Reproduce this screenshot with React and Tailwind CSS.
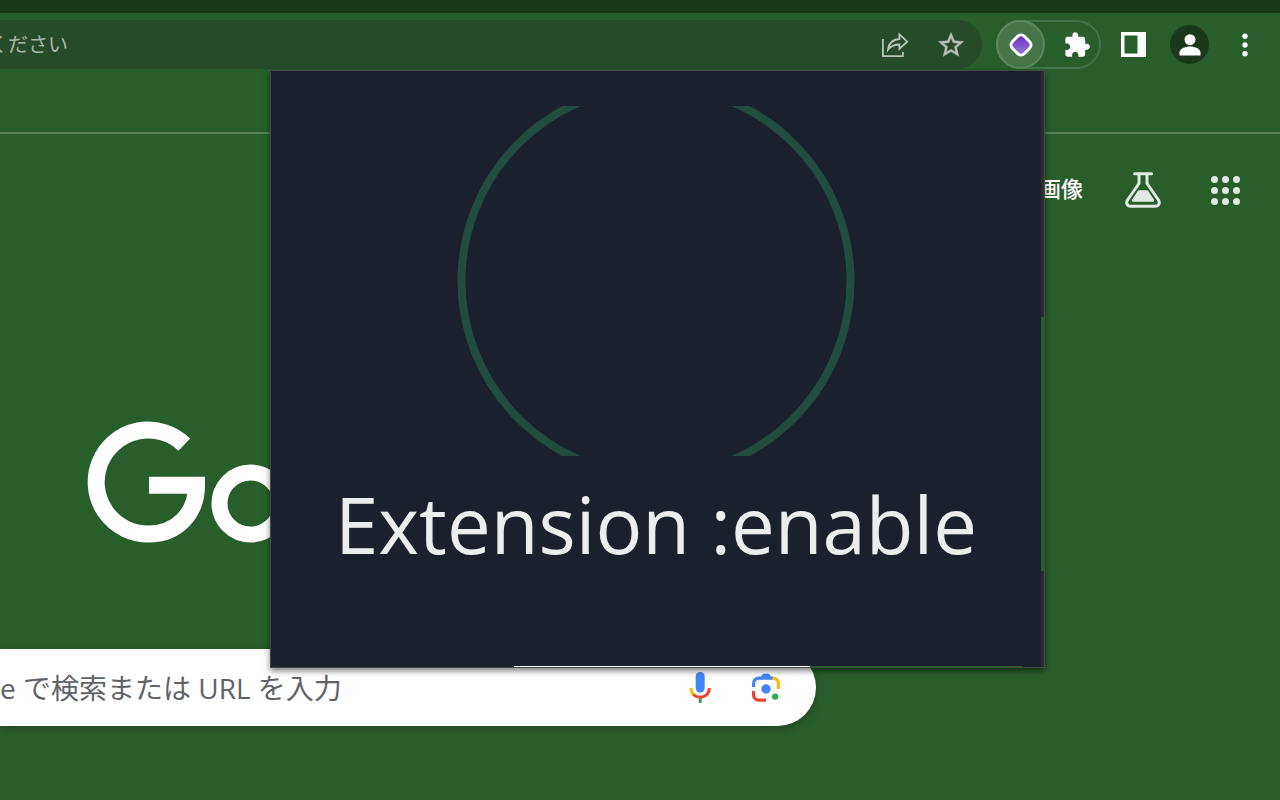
import React from "react";

const DOTS = [0, 1, 2, 3, 4, 5, 6, 7, 8];

function ShareIcon() {
  return (
    <svg width="28" height="28" viewBox="0 0 28 28" fill="none" stroke="#b9c4b9" strokeWidth="1.8">
      <path d="M1.9 8V25.2H21.9V21" />
      <path d="M7 18.7C7.5 12.5 11.5 8.6 18.4 8V3.4L26.2 10.7L18.4 18V13.5C13.5 13.5 10 14.8 7 18.7Z" />
    </svg>
  );
}

function StarIcon() {
  return (
    <svg width="30" height="30" viewBox="0 0 24 24" fill="#b9bfba" stroke="#b9bfba" strokeWidth="0.4">
      <path d="M22 9.24l-7.19-.62L12 2 9.19 8.63 2 9.24l5.46 4.73L5.82 21 12 17.27 18.18 21l-1.63-7.03L22 9.24zM12 15.4l-3.76 2.27 1-4.28-3.32-2.88 4.38-.38L12 6.1l1.71 4.04 4.38.38-3.32 2.88 1 4.28L12 15.4z" />
    </svg>
  );
}

function DiamondIcon() {
  return (
    <svg width="26" height="26" viewBox="0 0 26 26">
      <defs>
        <linearGradient id="purple" x1="0" y1="0" x2="1" y2="1">
          <stop offset="0" stopColor="#5b23c0" />
          <stop offset="1" stopColor="#a184dc" />
        </linearGradient>
      </defs>
      <rect x="4.5" y="4.5" width="17" height="17" rx="5" transform="rotate(45 13 13)" fill="url(#purple)" stroke="#fff" strokeWidth="3" />
    </svg>
  );
}

function PuzzleIcon() {
  return (
    <svg width="28" height="28" viewBox="0 0 24 24" fill="#fff">
      <path d="M20.5 11H19V7c0-1.1-.9-2-2-2h-4V3.5C13 2.12 11.88 1 10.5 1S8 2.12 8 3.5V5H4c-1.1 0-1.99.9-1.99 2v3.8H3.5c1.49 0 2.7 1.21 2.7 2.7s-1.21 2.7-2.7 2.7H2V20c0 1.1.9 2 2 2h3.8v-1.5c0-1.49 1.21-2.7 2.7-2.7 1.49 0 2.7 1.21 2.7 2.7V22H17c1.1 0 2-.9 2-2v-4h1.5c1.38 0 2.5-1.12 2.5-2.5S21.88 11 20.5 11z" />
    </svg>
  );
}

function FlaskIcon() {
  return (
    <svg width="36" height="36" viewBox="0 0 36 36" fill="none" stroke="#e2e9e2" strokeWidth="3" strokeLinecap="round" strokeLinejoin="round">
      <path d="M9.5 1.7H26.5" />
      <path d="M14 2V11.5L2.8 27.5C0.5 31 2 34.3 6 34.3H30C34 34.3 35.5 31 33.2 27.5L22 11.5V2" />
      <path d="M14 19.5H22L28 28.5H8Z" fill="#e2e9e2" strokeWidth="2.5" />
    </svg>
  );
}

function MicIcon() {
  return (
    <svg width="24" height="32" viewBox="0 0 24 32" fill="none">
      <rect x="7.7" y="0" width="9" height="20.5" rx="4.5" fill="#4285f4" />
      <path d="M12.2 26V31" stroke="#34a853" strokeWidth="3" />
      <path d="M3 16C3 19 4 21.2 5.6 22.8" stroke="#fbbc04" strokeWidth="3" />
      <path d="M5.3 22.5C9 26 15.4 26 18.8 22.5C20.5 20.8 21.3 18.7 21.3 16" stroke="#ea4335" strokeWidth="3" />
    </svg>
  );
}

function LensIcon() {
  return (
    <svg width="28" height="30" viewBox="0 0 28 30" fill="none" strokeWidth="3.2">
      <path d="M1.6 14V10.5C1.6 7 4 5.2 7 5.2H21" stroke="#4285f4" />
      <path d="M7.5 6L11 0.8H17L20.5 6Z" fill="#4285f4" />
      <path d="M20.5 5.2H21C24 5.2 26.4 7.3 26.4 10.5V16" stroke="#fbbc04" />
      <path d="M1.6 18V22C1.6 25.3 4 27.2 7 27.2H14" stroke="#ea4335" />
      <circle cx="14" cy="16" r="4.7" fill="#4285f4" />
      <circle cx="23.2" cy="23.6" r="3.2" fill="#34a853" />
    </svg>
  );
}

function Logo() {
  return (
    <svg width="190" height="124" viewBox="0 0 190 124" fill="none" stroke="#fff" role="img" aria-label="Google">
      <path d="M97.3 24.6A52 52 0 1 0 61.5 114C90 114 109.5 93.5 109.5 65.2H62" strokeWidth="17" />
      <circle cx="163.5" cy="83.5" r="31" strokeWidth="16" />
    </svg>
  );
}

function Toolbar() {
  return (
    <header className="flex h-[63px] items-center gap-3 bg-[#285e2b] pr-5">
      <div className="flex h-[49px] flex-1 items-center justify-between rounded-r-full bg-[#274a2a] pr-4">
        <input
          aria-label="Address"
          defaultValue="ください"
          className="w-40 bg-transparent -indent-3 text-xl text-[#a9b8aa] outline-none"
        />
        <div className="flex items-center gap-[27px]">
          <button aria-label="Share">
            <ShareIcon />
          </button>
          <button aria-label="Bookmark">
            <StarIcon />
          </button>
        </div>
      </div>
      <div className="ml-0.5 flex h-[49px] items-center gap-[18px] rounded-full border-2 border-[#42734a] pr-2">
        <button aria-label="Extension" className="-ml-0.5 flex h-[49px] w-[49px] items-center justify-center rounded-full border-2 border-[#5c8760] bg-[#467549]">
          <DiamondIcon />
        </button>
        <button aria-label="Extensions">
          <PuzzleIcon />
        </button>
      </div>
      <button aria-label="Side panel" className="ml-2">
        <svg width="25" height="25" viewBox="0 0 25 25">
          <path fill="#fff" fillRule="evenodd" d="M0 0H25V25H0ZM3.5 3.5V21.5H16.5V3.5Z" />
        </svg>
      </button>
      <button aria-label="Profile" className="ml-3 flex h-[39px] w-[39px] items-center justify-center rounded-full bg-[#1b381b]">
        <svg width="22" height="22" viewBox="0 0 22 22" fill="#fff">
          <circle cx="11" cy="5.7" r="5.5" />
          <path d="M0.5 21.5V18.5C0.5 14.8 6 12.5 11 12.5S21.5 14.8 21.5 18.5V21.5Z" />
        </svg>
      </button>
      <button aria-label="Menu" className="ml-[9px] flex w-[30px] justify-center">
        <svg width="6" height="24" viewBox="0 0 6 24" fill="#fff">
          <circle cx="3" cy="3.2" r="2.7" />
          <circle cx="3" cy="12" r="2.7" />
          <circle cx="3" cy="20.7" r="2.7" />
        </svg>
      </button>
    </header>
  );
}

function Popup() {
  return (
    <section className="absolute left-[270px] top-[70px] flex h-[598px] w-[775px] flex-col border border-[#464a46] bg-[#1b212c] shadow-[0_3px_6px_rgba(0,0,0,0.5)]">
      <div className="flex flex-1">
        <div className="flex flex-1 flex-col items-center pt-[35px]">
          <svg width="398" height="350" viewBox="0 0 398 350" fill="none">
            <circle cx="199" cy="175" r="194.5" stroke="#234c40" strokeWidth="8" />
          </svg>
          <p className="mt-3 whitespace-nowrap text-[78px] leading-[112px] text-[#eceeed]">
            Extension :enable
          </p>
        </div>
        <div className="w-[3px] bg-[#2d2d2f] pt-[246px]">
          <div className="h-[254px] bg-[#285e2b]"></div>
        </div>
      </div>
      <div className="flex h-px">
        <div className="w-[243px]"></div>
        <div className="w-[296px] bg-white"></div>
        <div className="w-[212px] bg-[#285e2b]"></div>
      </div>
    </section>
  );
}

export default function App() {
  return (
    <div className="relative min-h-screen overflow-hidden bg-[#285e2b] font-['Open_Sans','Noto_Sans_CJK_JP',sans-serif]">
      <div className="h-[13px] bg-[#1b381b]"></div>
      <Toolbar />
      <div className="h-[58px] border-b-2 border-[#588259]"></div>
      <nav className="mt-9 flex h-10 items-center justify-end gap-[42px] pr-10">
        <a href="#" className="pb-1 text-[22px] font-medium text-white">
          画像
        </a>
        <a href="#" aria-label="Labs">
          <FlaskIcon />
        </a>
        <a href="#" aria-label="Apps" className="ml-2 grid grid-cols-3 gap-1">
          {DOTS.map((dot) => (
            <span key={dot} className="h-[7px] w-[7px] rounded-full bg-[#e2e9e2]"></span>
          ))}
        </a>
      </nav>
      <main className="pt-[210px]">
        <div className="pl-[87px]">
          <Logo />
        </div>
        <form className="mt-[105px] flex h-[77px] w-[816px] items-center gap-10 rounded-r-full bg-white pr-9 shadow-[0_3px_8px_rgba(32,33,36,0.4)]">
          <input
            aria-label="Search"
            placeholder="e で検索または URL を入力"
            className="min-w-0 flex-1 bg-transparent text-[28px] text-[#5f6368] outline-none placeholder:text-[#5f6368]"
          />
          <button type="button" aria-label="Voice search">
            <MicIcon />
          </button>
          <button type="button" aria-label="Image search">
            <LensIcon />
          </button>
        </form>
      </main>
      <Popup />
    </div>
  );
}
